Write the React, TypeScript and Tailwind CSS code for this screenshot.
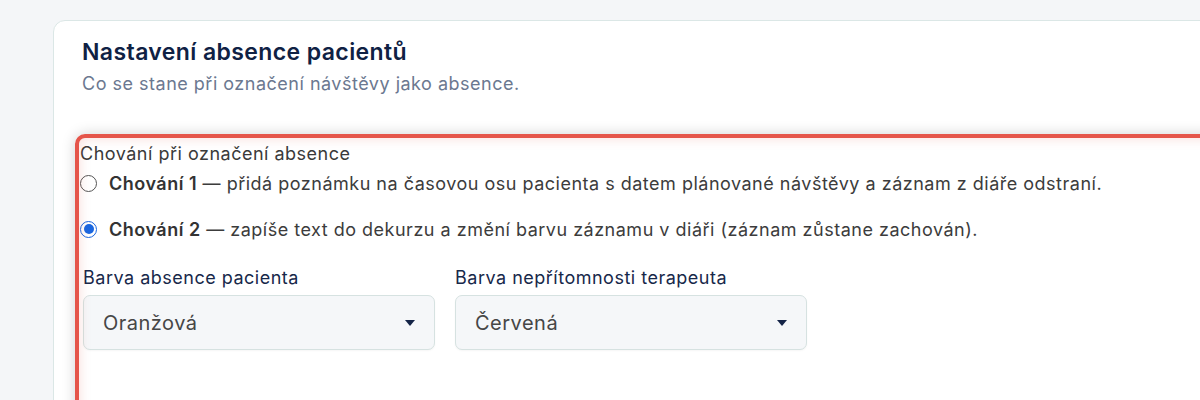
import React, { useState } from "react";

const font = { fontFamily: "Inter, 'Noto Sans', sans-serif" };

interface Option {
  id: string;
  title: string;
  text: string;
}

const behaviours: Option[] = [
  {
    id: "b1",
    title: "Chování 1",
    text: "přidá poznámku na časovou osu pacienta s datem plánované návštěvy a záznam z diáře odstraní.",
  },
  {
    id: "b2",
    title: "Chování 2",
    text: "zapíše text do dekurzu a změní barvu záznamu v diáři (záznam zůstane zachován).",
  },
];

const Caret: React.FC = () => (
  <svg width="10" height="6" viewBox="0 0 10 6" className="shrink-0">
    <path d="M0 0 H10 L5 6 Z" fill="#142447" />
  </svg>
);

const SelectBox: React.FC<{ label: string; value: string }> = ({ label, value }) => (
  <div className="flex flex-col">
    <span className="text-[18px] leading-[24px] tracking-[0.5px] text-[#17284a]">{label}</span>
    <div className="mt-[5px] flex h-[55px] w-[352px] items-center justify-between rounded-[7px] border border-[#d6e2e1] bg-[#f5f7f9] pl-[19px] pr-[19px] shadow-[0_1px_2px_rgba(0,0,0,0.04)]">
      <span className="text-[20px] tracking-[0.5px] text-[#464646]">{value}</span>
      <Caret />
    </div>
  </div>
);

export default function App() {
  const [selected, setSelected] = useState("b2");

  return (
    <div style={font} className="h-[400px] overflow-hidden bg-[#f4f6f8] pl-[53px] pt-[20px]">
      <div className="h-[420px] w-[1200px] rounded-xl border border-[#dbe7e6] bg-white pl-[28px] pt-[16px]">
        <h2 className="text-[23px] font-semibold leading-[30px] tracking-[0.4px] text-[#0f2144]">
          Nastavení absence pacientů
        </h2>
        <p className="mt-[4px] text-[18px] leading-[26px] tracking-[0.5px] text-[#6b7890]">
          Co se stane při označení návštěvy jako absence.
        </p>

        <div className="relative mt-[45px] -ml-[2px]">
          {/* highlight frame drawn over the section */}
          <div className="pointer-events-none absolute -left-[5px] -top-[8px] h-[400px] w-[1200px] rounded-[10px] border-[4px] border-[#e5554a] shadow-[0_0_14px_rgba(0,0,0,0.18),inset_0_0_12px_rgba(229,85,74,0.22)]" />

          <div className="text-[18px] leading-[24px] tracking-[0.5px] text-[#3a3a3a]">
            Chování při označení absence
          </div>

          <div className="mt-[5px] flex flex-col gap-[22px]">
            {behaviours.map((b) => (
              <label
                key={b.id}
                className="flex h-[24px] items-center gap-[12px] text-[18px] tracking-[0.5px] text-[#3c3c3c]"
              >
                <span
                  onClick={() => setSelected(b.id)}
                  className={
                    selected === b.id
                      ? "flex h-[17px] w-[17px] shrink-0 items-center justify-center rounded-full border-[1.5px] border-[#1a66e0] bg-white"
                      : "h-[17px] w-[17px] shrink-0 rounded-full border border-[#555]"
                  }
                >
                  {selected === b.id && <span className="h-[10px] w-[10px] rounded-full bg-[#1a66e0]" />}
                </span>
                <span className="whitespace-nowrap">
                  <b className="font-semibold text-[#333]">{b.title}</b> — {b.text}
                </span>
              </label>
            ))}
          </div>

          <div className="ml-[3px] mt-[25px] flex gap-[20px]">
            <SelectBox label="Barva absence pacienta" value="Oranžová" />
            <SelectBox label="Barva nepřítomnosti terapeuta" value="Červená" />
          </div>
        </div>
      </div>
    </div>
  );
}
